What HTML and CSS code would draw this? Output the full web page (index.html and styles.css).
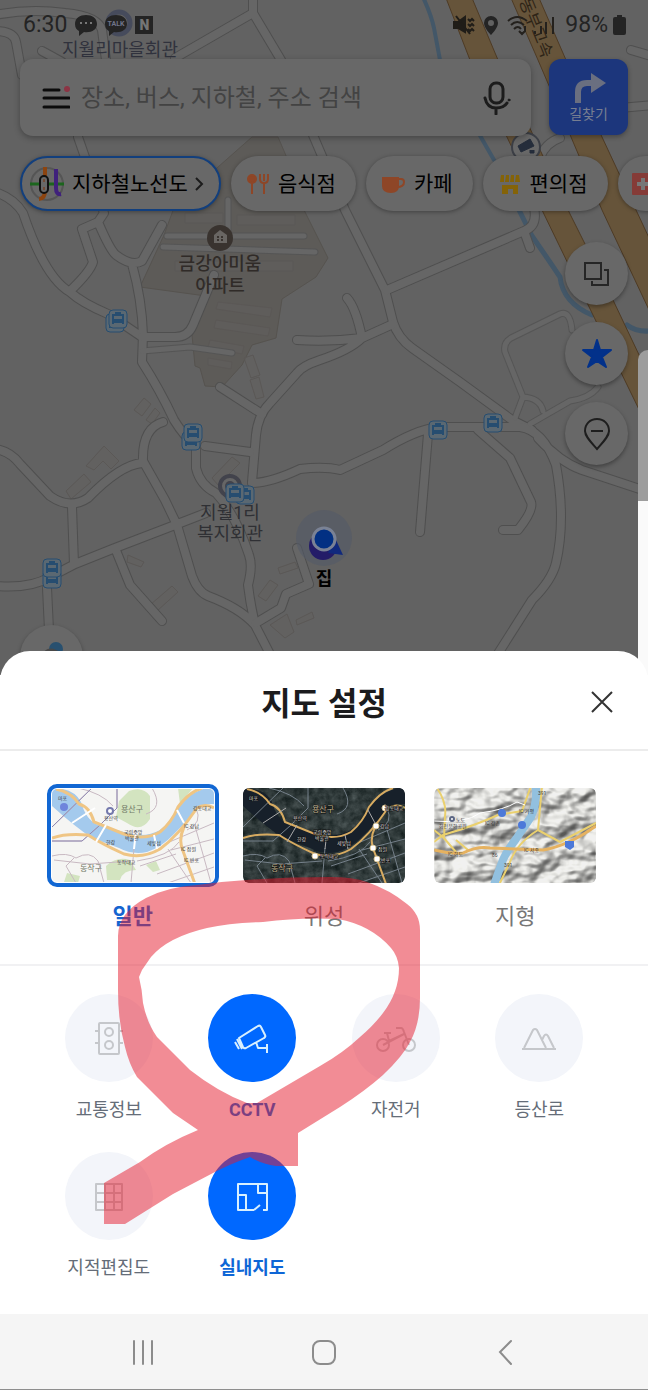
FILE: index.html
```html
<!doctype html>
<html lang="ko">
<head>
    <meta charset="UTF-8">
    <meta name="viewport" content="width=device-width, initial-scale=1.0">
    <title>지도 설정</title>
    <link rel="stylesheet" href="styles.css">
</head>
<body>
    <div class="app">
        <main class="map">
            <svg class="map__canvas" viewBox="0 0 648 675" preserveAspectRatio="xMinYMin slice" aria-hidden="true">
                <defs>
                    <g id="roads">
                        <path d="M-5 15Q30 8 65 13Q98 16 102 30L106 60M-5 31Q14 31 16 42L22 75M42 51L62 62M175 58L253 13V-5M253 13L281 60L345 210L385 290L393 322Q398 338 412 348L460 382L512 420L532 430"/>
                        <path d="M-5 192Q14 198 23 213Q45 278 70 292Q82 303 108 314L142 337M78 137L86 160L104 213L98 222L82 229L93 262Q90 272 70 291M98 222Q110 250 116 255Q132 267 142 261L162 225M132 264Q142 300 143 335L142 362Q160 390 174 420Q184 436 192 442"/>
                        <path d="M387 290L524 231Q538 226 534 208M524 231L530 248M393 324L362 338Q350 350 320 360Q302 366 297 373L270 403Q258 415 256 435L252 482M297 340Q330 342 362 338Q356 308 347 298"/>
                        <path d="M142 337H175Q188 337 193 325L214 275M220 387L262 414"/>
                        <path d="M-5 449Q10 451 20 464L50 496Q70 510 88 498Q120 465 142 463M72 507L74 564M-5 586Q30 589 50 577L75 564L115 548L175 525L206 513M163 422Q142 428 143 461L165 500L177 525L192 576Q198 592 208 596Q240 608 255 625L272 658M115 548L130 585L162 621M196 450V468Q200 485 216 493Q236 515 249 555Q253 566 248 585Q250 602 254 620M205 446L250 452"/>
                        <path d="M252 483Q270 483 300 469Q325 466 340 470L383 450Q415 430 438 427H520Q543 430 556 465Q566 520 556 563Q552 580 532 600L494 660M538 438Q560 462 582 470L655 494M428 434L420 532M478 430L510 458L531 502Q534 510 518 530H503M256 623L281 608L286 594L309 584L297 548M47 588L49 630"/>
                        <path d="M631 50L655 57M620 108L655 105M540 158Q545 143 560 138"/>
                    </g>
                    <g id="lanes">
                        <path d="M167 236H304M163 247L315 252M228 200V236M142 351L190 347L232 353M572 330Q570 310 560 314L511 338Q503 343 505 352L523 397L515 418M523 397Q540 398 543 411M530 424L570 401Q590 398 598 387"/>
                    </g>
                    <g id="bus">
                        <rect x="-9" y="-9" width="18" height="18" rx="4" fill="#5a6872" stroke="#264d70"/>
                        <path d="M-5 5V-4H5V5M-3-6H3M-5 1H5M-5 3H5" fill="none" stroke="#264d70" stroke-width="2"/>
                    </g>
                </defs>
                <rect width="648" height="675" fill="#626262"/>
                <path class="water" d="M422-5Q431 14 434 28L440 60M478 132L494 160"/>
                <path class="water water--wide" d="M518 208L532 236Q550 262 560 277Q563 303 592 315M627 325Q636 332 650 331"/>
                <path d="M252 137H278L290 165L304 210L328 258L316 277L282 299L276 338L252 345L242 365L222 387L205 386L200 368L195 366L192 335L206 296L140 287L164 235L175 205Z" fill="#5d5b58" stroke="#56534f"/>
                <g class="buildings">
                    <path d="M185 213h38v10h-38zM237 215h58v10h-58zM175 261h118v10h-118zM218 302l54 6-2 9-54-8zM216 320l54 8-2 8-54-8zM210 340l34 6-2 8-34-7zM208 358l24 4-1 7-23-4z"/>
                    <path d="M244 358l9-3 7 20-9 3zM250 380l9-3 5 20-8 2zM134 410l10-12 7 6-9 12zM146 420l9-12 5 5-8 11zM212 478l20-21 8 6-22 22zM86 466l18-20 15 15-8 8-8-8-9 9zM66 491l18-17 7 8-20 17zM128 555l16 7-3 5-14-5zM150 605l22-19 6 6-21 19zM278 568l17-6 3 6-18 6zM258 596l12-16 8 5-12 16zM270 625l17-11 7 18-9 6zM296 620l16-8 2 6-17 7z"/>
                </g>
                <use href="#lanes" class="lane-case"/>
                <use href="#roads" class="road-case"/>
                <use href="#roads" class="road"/>
                <use href="#lanes" class="lane"/>
                <path class="highway" d="M446-2H472L498 60L570 214L613 300L650 378V432L593 315L542 210L470 60Z"/>
                <path class="highway" d="M511-2H539L566 60L602 137L650 240V312L602 210L571 137L538 60Z"/>
                <text class="road-name" transform="translate(519 1) rotate(68)">동부고속</text>

                <circle cx="119" cy="23" r="11" fill="none" stroke="#464b5c" stroke-width="5"/>
                <text class="place place--blue" x="120" y="56">지월리마을회관</text>
                <circle cx="220" cy="238" r="13" fill="#39332f"/>
                <path d="M214 243V235L220 230L227 235V243Z" fill="#696663"/>
                <path d="M218 236v5M222 236v5" stroke="#39332f" stroke-width="2" stroke-dasharray="2 1"/>
                <text class="place place--brown" x="220" y="270">금강아미움</text>
                <text class="place place--brown" x="220" y="292">아파트</text>
                <circle cx="230" cy="486" r="10" fill="#666" stroke="#42434c" stroke-width="4"/>
                <circle cx="230" cy="486" r="5" fill="#42434c"/>
                <text class="place place--grey" x="230" y="519">지월1리</text>
                <text class="place place--grey" x="230" y="540">복지회관</text>
                <use href="#bus" x="115" y="323"/>
                <use href="#bus" x="118" y="319"/>
                <use href="#bus" x="191" y="441"/>
                <use href="#bus" x="193" y="433"/>
                <use href="#bus" x="438" y="430"/>
                <use href="#bus" x="493" y="423"/>
                <use href="#bus" x="245" y="495"/>
                <use href="#bus" x="235" y="493"/>
                <use href="#bus" x="52" y="579"/>
                <use href="#bus" x="52" y="568"/>
                <circle cx="526" cy="147" r="14" fill="#686868" stroke="#3c3f46" stroke-width="2"/>
                <path d="M518 146L530 139L534 146L521 152ZM530 150v3h4v-3" fill="#252d3b" stroke="#252d3b"/>

                <circle cx="324" cy="538" r="28" fill="#545a68" opacity=".6"/>
                <circle cx="323" cy="546" r="14" fill="#241c68"/>
                <path d="M335 538L343 555L328 553Z" fill="#10297d"/>
                <circle cx="324" cy="539" r="11" fill="#023083" stroke="#7a8295" stroke-width="3"/>
                <text class="place place--home" x="324" y="585">집</text>
            </svg>

            <header class="status">
                <span>6:30</span>
                <svg width="22" height="24" viewBox="0 0 22 24">
                    <path d="M11 2C5 2 0 5 0 11c0 4 2 6 4 7v5l5-4c7 1 13-2 13-8S17 2 11 2Z" fill="#242424"/>
                    <path d="M5 10h2M10 10h2M15 10h2" stroke="#777" stroke-width="2"/>
                </svg>
                <svg width="22" height="24" viewBox="0 0 22 24">
                    <path d="M11 2C5 2 0 5 0 11c0 4 2 6 4 7v5l5-4c7 1 13-2 13-8S17 2 11 2Z" fill="#242424"/>
                    <text x="11" y="13" text-anchor="middle" font-size="7" font-weight="700" fill="#70748a">TALK</text>
                </svg>
                <span class="status__n">N</span>
                <svg class="status__mute" width="22" height="22" viewBox="0 0 22 22" fill="none" stroke="#201d18" stroke-width="2">
                    <path d="M1 8H5L12 3V18L5 14H1Z" fill="#201d18"/>
                    <path d="M3 2L17 20M15 5l2 2 2-2 2 2M15 10l2 2 2-2 2 2M15 15l2 2 2-2 2 2"/>
                </svg>
                <svg width="16" height="22" viewBox="0 0 16 22">
                    <path d="M8 2a7 7 0 0 0-7 7c0 5 7 12 7 12s7-7 7-12a7 7 0 0 0-7-7Zm0 4a3 3 0 1 1 0 6 3 3 0 0 1 0-6Z" fill="#242424"/>
                </svg>
                <svg width="50" height="22" viewBox="0 0 50 22" fill="none" stroke="#24211d" stroke-width="2">
                    <path d="M1 7Q10-1 20 7M4 11Q10 5 17 11M7 15Q11 11 14 15M12 17l3 3 3-3M18 18v-6M28 20v-3M34 20v-8M39 20V8M46 20V3"/>
                </svg>
                <span class="status__battery">
                    98%
                    <svg width="13" height="22" viewBox="0 0 13 22">
                        <path d="M4 1H9V3H11Q13 3 13 5V19Q13 21 11 21H2Q0 21 0 19V5Q0 3 2 3H4Z" fill="#242424"/>
                    </svg>
                </span>
            </header>

            <div class="top">
                <form class="search">
                    <button type="button" aria-label="메뉴">
                        <svg width="30" height="26" viewBox="0 0 30 26">
                            <path d="M4 5H19M4 13H29M4 22H29" stroke="#0c0c0c" stroke-width="3" stroke-linecap="round"/>
                            <circle cx="27" cy="4" r="3" fill="#8c3444"/>
                        </svg>
                    </button>
                    <input type="text" placeholder="장소, 버스, 지하철, 주소 검색" aria-label="검색" autocomplete="off">
                    <button type="button" aria-label="음성 검색">
                        <svg width="28" height="34" viewBox="0 0 28 34" fill="none" stroke="#1c1c1c" stroke-width="3" stroke-linecap="round">
                            <rect x="7" y="2" width="13" height="20" rx="6"/>
                            <path d="M2 17Q4 27 13 27Q21 27 24 22M13 27V33"/>
                            <circle cx="26" cy="19" r="1" fill="#1c1c1c" stroke-width="1"/>
                        </svg>
                    </button>
                </form>
                <button class="route">
                    <svg width="34" height="32" viewBox="0 0 34 32">
                        <path d="M6 31V20Q6 11 15 11H20" fill="none" stroke="#6a6f80" stroke-width="6"/>
                        <path d="M19 1L34 11L19 21Z" fill="#6a6f80"/>
                    </svg>
                    길찾기
                </button>
            </div>

            <nav class="chips">
                <button class="chip chip--active">
                    <svg width="36" height="36" viewBox="0 0 36 36" fill="none" stroke-width="4">
                        <circle cx="18" cy="18" r="16" stroke="#555" stroke-width="2"/>
                        <path d="M1 18H35" stroke="#1b651d" stroke-width="3"/>
                        <path d="M16 1V24Q16 33 10 33" stroke="#8c4410"/>
                        <path d="M27 3V22Q27 29 32 28" stroke="#40217c"/>
                        <rect x="11" y="10" width="8" height="17" rx="4" fill="#686868" stroke="#111" stroke-width="2"/>
                        <path d="M15 13v11" stroke="#734a35" stroke-width="2" stroke-dasharray="3 5"/>
                    </svg>
                    지하철노선도
                    <svg width="9" height="16" viewBox="0 0 9 16" fill="none" stroke="#1c1c1c" stroke-width="2"><path d="M1 2L7 8L1 14"/></svg>
                </button>
                <button class="chip">
                    <svg width="22" height="22" viewBox="0 0 22 22" fill="none" stroke="#8e4627" stroke-width="2">
                        <circle cx="5" cy="6" r="4" fill="#8e4627"/>
                        <path d="M5 9V21M17 9V21M13 1V6Q13 10 17 10Q21 10 21 6V1M17 1V8"/>
                    </svg>
                    음식점
                </button>
                <button class="chip">
                    <svg width="23" height="22" viewBox="0 0 23 22">
                        <path d="M0 4H17V13Q17 20 9 20Q0 20 0 13Z" fill="#8e4627"/>
                        <path d="M16 6H19Q22 6 22 9Q22 14 15 14" fill="none" stroke="#8e4627" stroke-width="2"/>
                    </svg>
                    카페
                </button>
                <button class="chip">
                    <svg width="22" height="22" viewBox="0 0 22 22" fill="#846308">
                        <path d="M2 2H5V9H1ZM7 2H10V9H6ZM12 2H15V9H11ZM17 2H20L21 9H16ZM3 12H19V21H14V16H9V21H3Z"/>
                    </svg>
                    편의점
                </button>
                <button class="chip chip--icon" aria-label="병원">
                    <svg width="22" height="22" viewBox="0 0 22 22">
                        <rect width="22" height="22" rx="1" fill="#853b37"/>
                        <path d="M11 5V17M5 11H17" stroke="#777" stroke-width="4"/>
                    </svg>
                </button>
            </nav>

            <div class="side">
                <button class="round" aria-label="지도 종류">
                    <svg width="28" height="28" viewBox="0 0 28 28" fill="none" stroke="#262626" stroke-width="2">
                        <path d="M2 3H18V19H2ZM21 10H25V25H9V21"/>
                    </svg>
                </button>
                <button class="round" aria-label="즐겨찾기">
                    <svg width="32" height="32" viewBox="0 0 32 32">
                        <path d="M16 2L19 12L30 12L21 19L25 29L16 23L7 29L11 19L2 12L13 12Z" fill="#02318a" stroke="#02318a" stroke-width="2" stroke-linejoin="round"/>
                    </svg>
                </button>
                <button class="round" aria-label="장소 숨기기">
                    <svg width="28" height="34" viewBox="0 0 28 34" fill="none" stroke="#1e1e1e" stroke-width="2">
                        <path d="M14 2C7 2 2 7 2 14C2 19 7 24 14 32C21 24 26 19 26 14C26 7 21 2 14 2ZM8 14H20"/>
                    </svg>
                </button>
            </div>
            <button class="round round--weather" aria-label="날씨">
                <svg width="40" height="40" viewBox="0 0 40 40">
                    <circle cx="24" cy="12" r="7" fill="#28506f"/>
                    <path d="M9 20Q14 8 24 13Q32 16 36 24V30H9Z" fill="#484848"/>
                </svg>
            </button>
            <div class="edge"></div>
        </main>

        <section class="sheet">
            <div class="sheet__head">
                <h2>지도 설정</h2>
                <button aria-label="닫기">
                    <svg width="24" height="24" viewBox="0 0 24 24" stroke="#333" stroke-width="2"><path d="M2 2L22 22M22 2L2 22"/></svg>
                </button>
            </div>

            <div class="types">
                <button class="type type--active" aria-pressed="true">
                    <svg class="type__thumb" viewBox="0 0 162 95" preserveAspectRatio="xMidYMid slice" aria-hidden="true">
                        <defs>
                            <path id="river" d="M0 0Q22 0 29 14Q34 32 46 37L72 44Q92 51 108 42Q121 32 126 18Q138 3 162-2V16Q148 15 143 24Q130 38 122 46Q110 59 95 64Q80 67 67 60L40 50Q22 38 0 18Z"/>
                            <path id="banks" d="M4 1Q19 4 27 16Q38 19 42 34L72 46Q92 53 108 44Q120 34 126 19Q137 4 150 0M0 50Q14 45 36 47Q50 56 72 66Q91 71 108 61Q126 48 145 20Q153 15 162 20M132 39Q126 52 131 63L143 96"/>
                            <path id="streets" d="M0 39L42-2M0 53H30Q48 38 65 20V0M26 0Q50 5 61 18M0 68Q15 64 24 70Q38 62 46 73L52 95M22 70L14 78L24 95M82 60L79 95M85 73Q118 68 127 54M88 78L124 66M105 86L162 65M113 96L162 79M115 55L162 35M119 62L162 51M116 61L139 95M143 38L159 95M100 0Q112 20 94 26M144 20Q151 35 135 42M2 72L38 76L79 73"/>
                            <path id="bridges" d="M20 35L43 20M44 54L54 37M82 61L84 43M102 47L105 61M125 22L132 35"/>
                        </defs>
                        <rect width="162" height="95" fill="#f5f5f3"/>
                        <path d="M77 3Q91-2 98 8V31Q89 45 75 35L64 29L67 13ZM54 78Q65 68 78 72L84 82Q71 82 68 92H55ZM12 94L15 85L28 88L26 95ZM94 77L104 73L108 82L101 84ZM126 0H141L128 16Z" fill="#d3e4c0"/>
                        <use href="#river" fill="#a4caed"/>
                        <use href="#streets" class="streets"/>
                        <path d="M0 53H30Q48 38 65 20V0M0 39L42-2" class="metro"/>
                        <use href="#banks" class="banks"/>
                        <use href="#bridges" class="bridges"/>
                        <circle cx="58" cy="23" r="3" fill="#fff" stroke="#7479ac" stroke-width="2"/>
                        <circle cx="12" cy="19" r="4" fill="#6f85dc"/>
                        <g class="thumb-label">
                            <text x="69" y="24" class="thumb-label--big">용산구</text>
                            <text x="28" y="83" class="thumb-label--big">동작구</text>
                            <text x="6" y="12">마포</text><text x="52" y="32">용산역</text>
                            <text x="72" y="46">국립중앙</text><text x="73" y="52">박물관</text>
                            <text x="54" y="56">한강</text><text x="95" y="57">세빛섬</text><text x="65" y="76">동작대교</text>
                            <text x="141" y="22">강동대교</text><text x="132" y="40">IC 강남</text><text x="129" y="63">IC 잠원</text><text x="132" y="74">IC 반포</text>
                        </g>
                    </svg>
                    일반
                </button>
                <button class="type" aria-pressed="false">
                    <svg class="type__thumb type__thumb--dark" viewBox="0 0 162 95" preserveAspectRatio="xMidYMid slice" aria-hidden="true">
                        <defs>
                            <filter id="ground" x="0" y="0" width="100%" height="100%" color-interpolation-filters="sRGB">
                                <feTurbulence type="fractalNoise" baseFrequency=".12" numOctaves="4" seed="8"/>
                                <feColorMatrix values=".3 0 0 0 .04  .3 0 0 0 .08  .3 0 0 0 .08  0 0 0 0 1"/>
                            </filter>
                        </defs>
                        <rect width="162" height="95" filter="url(#ground)"/>
                        <use href="#river" fill="#17202a"/>
                        <use href="#streets" class="streets"/>
                        <use href="#banks" class="banks"/>
                        <use href="#bridges" class="bridges"/>
                        <g fill="#fff" stroke="#d6c396">
                            <circle cx="72" cy="68" r="3"/><circle cx="142" cy="20" r="3"/><circle cx="133" cy="38" r="3"/><circle cx="130" cy="60" r="3"/><circle cx="134" cy="71" r="3"/>
                        </g>
                        <g class="thumb-label thumb-label--light">
                            <text x="69" y="24" class="thumb-label--big">용산구</text>
                            <text x="28" y="83" class="thumb-label--big">동작구</text>
                            <text x="6" y="12">마포</text><text x="50" y="32">용산역</text>
                            <text x="70" y="46">국립중앙</text><text x="72" y="52">박물관</text>
                            <text x="54" y="53">한강</text><text x="94" y="57">세빛섬</text><text x="77" y="70">동작대교</text>
                            <text x="142" y="22">강동대교</text><text x="137" y="40">강남</text><text x="135" y="63">잠원</text><text x="138" y="74">반포</text>
                        </g>
                    </svg>
                    위성
                </button>
                <button class="type" aria-pressed="false">
                    <svg class="type__thumb" viewBox="0 0 162 95" preserveAspectRatio="xMidYMid slice" aria-hidden="true">
                        <defs>
                            <filter id="hills" x="0" y="0" width="100%" height="100%" color-interpolation-filters="sRGB">
                                <feTurbulence type="fractalNoise" baseFrequency=".03 .045" numOctaves="3" seed="5"/>
                                <feDiffuseLighting lighting-color="#f0f0ec" surfaceScale="14" diffuseConstant="1.1">
                                    <feDistantLight azimuth="225" elevation="55"/>
                                </feDiffuseLighting>
                            </filter>
                        </defs>
                        <rect width="162" height="95" fill="#dcdcda"/>
                        <!-- the noise lives in the alpha channel, lighting turns it into relief -->
                        <rect width="162" height="95" filter="url(#hills)" opacity=".6"/>
                        <path d="M102-2Q103 16 97 29L82 51Q71 65 67 77L60 97" fill="none" stroke="#92c0df" stroke-width="8"/>
                        <g fill="none" stroke="#ead06e" stroke-width="2">
                            <path d="M3 0Q13 15 11 28L10 50L0 42M0 54L9 47Q40 38 64 27L88 23L97-2M108-2L104 42Q83 55 76 74L65 97M104 42L126 54L162 35M9 49L22 64M22 52L34 62"/>
                            <path d="M0 62Q15 66 29 65Q43 58 56 60L109 62Q134 58 162 38" stroke="#e6b260" stroke-width="3"/>
                        </g>
                        <path d="M0 33Q31 36 46 25Q70 22 83 14L91 17" fill="none" stroke="#fff"/>
                        <g fill="#4c79d9"><circle cx="68" cy="25" r="4"/><circle cx="88" cy="37" r="4"/><path d="M131 53h9v6l-4 3-5-3z"/></g>
                        <circle cx="18" cy="31" r="2" fill="#fff" stroke="#5b6683" stroke-width="2"/>
                        <g class="thumb-label">
                            <text x="22" y="34">노도</text><text x="5" y="40">화전문화공원</text><text x="51" y="37">IC 강촌</text>
                            <text x="85" y="25">IC 가평</text><text x="14" y="68">IC 화도</text><text x="90" y="64">IC 서종</text>
                            <text x="58" y="69">86</text><text x="104" y="7">391</text><text x="70" y="79">391</text>
                        </g>
                    </svg>
                    지형
                </button>
            </div>

            <div class="layers">
                <button class="layer" aria-pressed="false">
                    <span class="layer__icon">
                        <svg width="36" height="36" viewBox="0 0 36 36">
                            <rect x="8" y="3" width="20" height="31" rx="1"/>
                            <circle cx="18" cy="12" r="4"/><circle cx="18" cy="25" r="4"/>
                            <path d="M8 11H4M8 23H4M28 11H32M28 23H32"/>
                        </svg>
                    </span>
                    교통정보
                </button>
                <button class="layer layer--active" aria-pressed="true">
                    <span class="layer__icon">
                        <svg width="36" height="36" viewBox="0 0 36 36">
                            <path d="M5 18L24 6Q26 5 27 7L31 15Q32 17 30 18L12 28Q10 29 9 27ZM3 19L8 29M1 22L5 29M22 22L24 28H33M33 24V33"/>
                        </svg>
                    </span>
                    CCTV
                </button>
                <button class="layer" aria-pressed="false">
                    <span class="layer__icon">
                        <svg width="40" height="36" viewBox="0 0 40 36">
                            <circle cx="7" cy="25" r="6"/><circle cx="33" cy="25" r="6"/>
                            <path d="M7 25L28 14L13 21L11 13M8 13H15M20 8H25Q27 8 28 12L33 25"/>
                        </svg>
                    </span>
                    자전거
                </button>
                <button class="layer" aria-pressed="false">
                    <span class="layer__icon">
                        <svg width="36" height="36" viewBox="0 0 36 36">
                            <path d="M1 29H35M3 28L12 10Q14 8 16 10L25 28M21 20L23 16Q25 13 27 16L33 28"/>
                        </svg>
                    </span>
                    등산로
                </button>
                <button class="layer" aria-pressed="false">
                    <span class="layer__icon">
                        <svg width="36" height="36" viewBox="0 0 36 36">
                            <path d="M5 6H31V32H5ZM14 6V32M23 6V32M5 15H31M5 24H31"/>
                        </svg>
                    </span>
                    지적편집도
                </button>
                <button class="layer layer--active" aria-pressed="true">
                    <span class="layer__icon">
                        <svg width="36" height="36" viewBox="0 0 36 36">
                            <path d="M20 32H4V6H33V32H29M24 6V15H33M4 17H12V32M20 32L26 27"/>
                        </svg>
                    </span>
                    실내지도
                </button>
            </div>

            <svg class="sheet__marker" viewBox="0 651 648 663" aria-hidden="true">
                <path fill="#e5192c" fill-opacity=".5" fill-rule="evenodd" d="M118 970V936Q118 913 146 898Q167 887 197 885Q260 877 330 877Q353 877 367 882Q390 890 407 904Q420 914 420 930V998Q420 1024 410 1042Q403 1056 383 1075Q365 1091 340 1107L298 1133V1166H276Q262 1164 250 1157Q230 1164 213 1173L173 1194L125 1224H104V1183L140 1162Q166 1143 198 1130L173 1113L137 1077Q129 1064 125 1047Q118 1022 118 990ZM142 970L139 977Q142 989 143 1003Q147 1023 157 1037Q173 1053 190 1070Q218 1092 247 1103H257L320 1066Q343 1053 360 1037Q374 1025 383 1013Q399 992 399 968Q398 956 391 948Q371 925 338 919Q300 917 263 922Q230 923 207 928Q168 937 151 957Z"/>
            </svg>
        </section>

        <footer class="nav">
            <button aria-label="최근 앱"><svg width="28" height="28" viewBox="0 0 28 28"><path d="M5 3V26M14 3V26M23 3V26"/></svg></button>
            <button aria-label="홈"><svg width="28" height="28" viewBox="0 0 28 28"><rect x="3" y="3" width="22" height="23" rx="7"/></svg></button>
            <button aria-label="뒤로"><svg width="28" height="28" viewBox="0 0 28 28"><path d="M20 3L9 14L20 26"/></svg></button>
        </footer>
    </div>
</body>
</html>
```
FILE: styles.css
```css
*, ::before, ::after {
    padding: 0;
    margin: 0;
    box-sizing: border-box;
}
body {
    font-family: 'Roboto', 'Noto Sans CJK KR', sans-serif;
    background: #ffffff;
}
button {
    border: none;
    background: none;
    font-family: inherit;
    cursor: pointer;
}
svg {
    flex-shrink: 0;
}
.app {
    min-height: 100vh;
    display: flex;
    flex-direction: column;
}

/* map */
.map {
    position: relative;
    flex: 1;
    min-height: 560px;
    overflow: hidden;
    background: #626262;
}
.map__canvas {
    position: absolute;
    top: 0;
    left: 0;
    width: 100%;
    height: 100%;
}
.road-case, .road, .lane-case, .lane, .water {
    fill: none;
    stroke-linecap: round;
    stroke-linejoin: round;
}
.road-case {
    stroke: #4f4f4f;
    stroke-width: 10px;
}
.road {
    stroke: #666666;
    stroke-width: 8px;
}
.lane-case {
    stroke: #555555;
    stroke-width: 7px;
}
.lane {
    stroke: #666666;
    stroke-width: 5px;
}
.water {
    stroke: #435768;
    stroke-width: 4px;
}
.water--wide {
    stroke-width: 5px;
}
.highway {
    fill: #66543a;
    stroke: #4e3b25;
}
.buildings {
    fill: #62605e;
    fill-opacity: .5;
    stroke: #5b5856;
}
.road-name {
    font-size: 17px;
    fill: #2e2417;
}
.place {
    font-size: 18px;
    text-anchor: middle;
}
.place--blue {
    fill: #30323d;
}
.place--brown {
    fill: #302b28;
    font-weight: 500;
}
.place--grey {
    fill: #2f3034;
}
.place--home {
    fill: #000000;
    font-weight: 700;
}

/* status bar */
.status {
    position: relative;
    display: flex;
    align-items: center;
    gap: 8px;
    height: 59px;
    padding: 0 22px 10px 23px;
    font-size: 23px;
    line-height: 28px;
    color: #242424;
}
.status__n {
    width: 18px;
    height: 18px;
    background: #242424;
    color: #757575;
    font-size: 14px;
    font-weight: 900;
    line-height: 18px;
    text-align: center;
}
.status__mute {
    margin-left: auto;
}
.status__battery {
    display: flex;
    align-items: center;
    gap: 5px;
}

/* search */
.top {
    position: relative;
    display: flex;
    gap: 18px;
    padding: 0 20px;
}
.search {
    flex: 1;
    min-width: 0;
    height: 77px;
    display: flex;
    align-items: center;
    padding: 0 20px;
    background: #686868;
    border-radius: 13px;
    box-shadow: 0 2px 6px rgba(0, 0, 0, .3);
}
.search button {
    display: flex;
}
.search input {
    flex: 1;
    min-width: 0;
    margin: 0 11px;
    border: none;
    outline: none;
    background: none;
    font-family: inherit;
    font-size: 24px;
    color: #222222;
}
.search input::placeholder {
    color: #434343;
    opacity: 1;
}
.route {
    width: 79px;
    height: 76px;
    display: flex;
    flex-direction: column;
    align-items: center;
    justify-content: center;
    gap: 2px;
    background: #1c367c;
    color: #777e91;
    border-radius: 12px;
    font-size: 14px;
    line-height: 16px;
    box-shadow: 0 2px 5px rgba(0, 0, 0, .3);
}

/* chips */
.chips {
    position: relative;
    display: flex;
    gap: 10px;
    padding: 20px 20px 0;
}
.chip {
    flex-shrink: 0;
    display: flex;
    align-items: center;
    gap: 9px;
    height: 55px;
    padding: 0 20px 0 16px;
    background: #686868;
    border-radius: 28px;
    font-size: 21px;
    line-height: 28px;
    color: #000000;
    white-space: nowrap;
    box-shadow: 0 1px 4px rgba(0, 0, 0, .35);
}
.chip--active {
    gap: 7px;
    padding: 0 15px 0 7px;
    border: 2px solid #123f7d;
}
.chip--icon {
    width: 104px;
    padding: 0 14px;
}

/* floating buttons */
.side {
    position: relative;
    display: flex;
    flex-direction: column;
    align-items: flex-end;
    gap: 17px;
    padding: 31px 20px 0;
}
.round {
    width: 63px;
    height: 63px;
    display: flex;
    align-items: center;
    justify-content: center;
    background: #686868;
    border-radius: 50%;
    box-shadow: 0 2px 4px rgba(0, 0, 0, .35);
}
.round--weather {
    position: absolute;
    left: 20px;
    bottom: -13px;
}
.edge {
    position: absolute;
    right: 0;
    top: 350px;
    bottom: 0;
    width: 10px;
    border-radius: 12px 0 0 0;
    background: linear-gradient(#9d9d9d 151px, #fafafa 151px);
}

/* settings sheet */
.sheet {
    position: relative;
    margin-top: -24px;
    background: #ffffff;
    border-radius: 30px 30px 0 0;
}
.sheet__head {
    display: flex;
    align-items: center;
    height: 100px;
    padding: 3px 34px 0 94px;
    border-bottom: 2px solid #ececec;
}
.sheet__head h2 {
    flex: 1;
    padding-top: 4px;
    font-size: 32px;
    font-weight: 700;
    line-height: 40px;
    text-align: center;
    color: #1b1b1d;
}
.sheet__head button {
    display: flex;
    justify-content: flex-end;
    width: 60px;
    padding: 0;
}
.types {
    display: grid;
    grid-template-columns: repeat(3, 1fr);
    padding: 33px 37px 31px;
    border-bottom: 2px solid #f1f1f3;
}
.type {
    display: flex;
    flex-direction: column;
    align-items: center;
    gap: 14px;
    font-size: 22px;
    line-height: 32px;
    color: #777777;
}
.type__thumb {
    width: 172px;
    max-width: 94%;
    height: 103px;
    padding: 4px 5px;
    border-radius: 10px;
    clip-path: inset(4px 5px round 6px);
}
.type--active {
    color: #1565d0;
    font-weight: 700;
}
.type--active .type__thumb {
    clip-path: none;
    padding: 1px;
    border: 4px solid #1167d3;
}
.streets {
    fill: none;
    stroke: #c8b9c2;
    stroke-width: 1px;
}
.banks {
    fill: none;
    stroke: #efc584;
    stroke-width: 3px;
}
.bridges {
    fill: none;
    stroke: #ffffff;
    stroke-width: 2px;
}
.metro {
    fill: none;
    stroke: #8e87b1;
    stroke-width: 1px;
}
.type__thumb--dark .streets {
    stroke: #75808a;
}
.type__thumb--dark .banks {
    stroke: #d7ab61;
    stroke-width: 2px;
}
.type__thumb--dark .bridges {
    stroke: #aaaaaa;
    stroke-width: 1px;
}
.thumb-label {
    font-size: 5px;
    font-weight: 400;
    fill: #3c3c3c;
}
.thumb-label--light {
    fill: #dddddd;
    stroke: #111111;
    stroke-width: 1px;
    paint-order: stroke;
}
.thumb-label--big {
    font-size: 8px;
    fill: #707866;
}
.thumb-label--light .thumb-label--big {
    fill: #c6b896;
}
.layers {
    display: grid;
    grid-template-columns: repeat(4, 1fr);
    row-gap: 28px;
    padding: 28px 37px 32px;
}
.layer {
    display: flex;
    flex-direction: column;
    align-items: center;
    gap: 14px;
    font-size: 18px;
    line-height: 28px;
    color: #656d78;
}
.layer__icon {
    width: 88px;
    height: 88px;
    display: flex;
    align-items: center;
    justify-content: center;
    border-radius: 50%;
    background: #f3f5fa;
}
.layer__icon svg {
    fill: none;
    stroke: #c5c7cb;
    stroke-width: 2px;
    stroke-linejoin: round;
}
.layer--active {
    color: #0e66d6;
    font-weight: 700;
}
.layer--active .layer__icon {
    background: #0068ff;
}
.layer--active svg {
    stroke: #d8f0ff;
}
.sheet__marker {
    position: absolute;
    top: 0;
    left: 0;
    width: 100%;
    pointer-events: none;
}

/* system buttons */
.nav {
    display: flex;
    height: 76px;
    padding: 0 52px;
    background: #f5f5f5;
    border-bottom: 1px solid #8e8e8e;
}
.nav button {
    flex: 1;
    display: flex;
    align-items: center;
    justify-content: center;
}
.nav svg {
    fill: none;
    stroke: #8c8c8c;
    stroke-width: 2px;
    stroke-linecap: round;
}
```
